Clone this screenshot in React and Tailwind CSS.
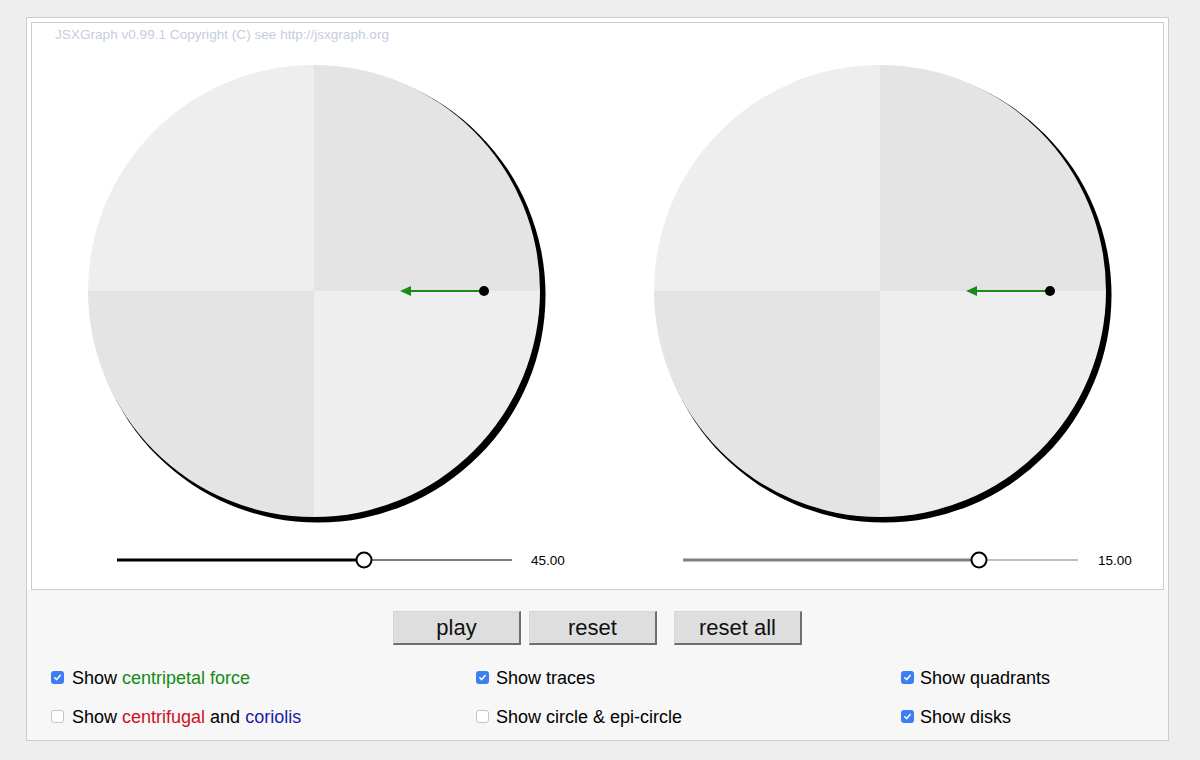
import React from "react";

function Disk({ cx, cy, r, dot, tip }) {
  return (
    <g>
      <circle cx={cx + 4} cy={cy + 4} r={r + 1.5} fill="#000" />
      <path d={`M${cx},${cy} L${cx - r},${cy} A${r},${r} 0 0 1 ${cx},${cy - r} Z`} fill="#eeeeee" />
      <path d={`M${cx},${cy} L${cx},${cy - r} A${r},${r} 0 0 1 ${cx + r},${cy} Z`} fill="#e4e4e4" />
      <path d={`M${cx},${cy} L${cx + r},${cy} A${r},${r} 0 0 1 ${cx},${cy + r} Z`} fill="#eeeeee" />
      <path d={`M${cx},${cy} L${cx},${cy + r} A${r},${r} 0 0 1 ${cx - r},${cy} Z`} fill="#e4e4e4" />
      <line x1={dot} y1={cy} x2={tip + 9} y2={cy} stroke="#1a8a1a" strokeWidth="2" />
      <polygon points={`${tip},${cy} ${tip + 11},${cy - 5} ${tip + 11},${cy + 5}`} fill="#1a8a1a" />
      <circle cx={dot} cy={cy} r="5" fill="#000" />
    </g>
  );
}

function Slider({ x1, x2, k, y, color, label, tx }) {
  return (
    <g>
      <line x1={k} y1={y} x2={x2} y2={y} stroke={color} strokeWidth="1.2" />
      <line x1={x1} y1={y} x2={k} y2={y} stroke={color} strokeWidth="3" />
      <circle cx={k} cy={y} r="7.5" fill="#fff" stroke="#000" strokeWidth="2" />
      <text x={tx} y={y + 5} fontSize="13.5" fontFamily="'Liberation Sans', Arial, sans-serif" fill="#000">
        {label}
      </text>
    </g>
  );
}

function Check({ checked }) {
  if (checked) {
    return (
      <span className="w-[13px] h-[13px] rounded-[3px] bg-[#3b7ff2] flex items-center justify-center shrink-0">
        <svg width="9" height="9" viewBox="0 0 9 9">
          <path d="M1.8 4.8 L3.7 6.6 L7.2 2.4" fill="none" stroke="#fff" strokeWidth="1.5" strokeLinecap="round" strokeLinejoin="round" />
        </svg>
      </span>
    );
  }
  return <span className="w-[13px] h-[13px] rounded-[3px] bg-white border border-[#c4c4c4] shrink-0" />;
}

function Item({ checked, children, gap = "gap-[8px]" }) {
  return (
    <div className={`flex items-center ${gap} h-[39px]`}>
      <Check checked={checked} />
      <span className="text-[18px] text-black leading-none">{children}</span>
    </div>
  );
}

const btn =
  "w-[128px] h-[34px] bg-[#dedede] border-t border-l border-[#d6d6d6] border-r-2 border-b-2 border-r-[#6e6e6e] border-b-[#6e6e6e] text-[22px] text-[#111] leading-none flex items-center justify-center";

export default function App() {
  return (
    <div
      className="w-[1200px] h-[760px] bg-[#eeeeee] pt-[17px] pl-[26px]"
      style={{ fontFamily: "'Liberation Sans', Arial, sans-serif" }}
    >
      <div className="w-[1143px] h-[724px] border border-[#cccccc] bg-[#f7f7f7] flex flex-col">
        <div className="bg-white px-[4px] pt-[4px]">
          <div className="w-[1133px] h-[568px] border border-[#cccccc] bg-white">
            <svg width="1132" height="566" className="block">
              <text x="23" y="16" fontSize="13.6" fontFamily="'Liberation Sans', Arial, sans-serif" fill="#c6cde0">
                JSXGraph v0.99.1 Copyright (C) see http://jsxgraph.org
              </text>
              <Disk cx={282} cy={268} r={226} dot={452} tip={368} />
              <Disk cx={848} cy={268} r={226} dot={1018} tip={934} />
              <Slider x1={85} x2={480} k={332} y={537} color="#000" label="45.00" tx={499} />
              <Slider x1={651} x2={1046} k={947} y={537} color="#808080" label="15.00" tx={1066} />
            </svg>
          </div>
        </div>
        <div className="flex-1 pt-[21px]">
          <div className="flex justify-center">
            <div className={btn}>play</div>
            <div className={`${btn} ml-[8px]`}>reset</div>
            <div className={`${btn} ml-[17px]`}>reset all</div>
          </div>
          <div className="mt-[13px] pl-[24px] grid grid-cols-[425px_425px_1fr]">
            <Item checked>
              Show <span className="text-[#138a13]">centripetal force</span>
            </Item>
            <Item checked gap="gap-[7px]">Show traces</Item>
            <Item checked gap="gap-[6px]">Show quadrants</Item>
            <Item>
              Show <span className="text-[#cc1122]">centrifugal</span> and{" "}
              <span className="text-[#1c1ca8]">coriolis</span>
            </Item>
            <Item gap="gap-[7px]">Show circle &amp; epi-circle</Item>
            <Item checked gap="gap-[6px]">Show disks</Item>
          </div>
        </div>
      </div>
    </div>
  );
}
